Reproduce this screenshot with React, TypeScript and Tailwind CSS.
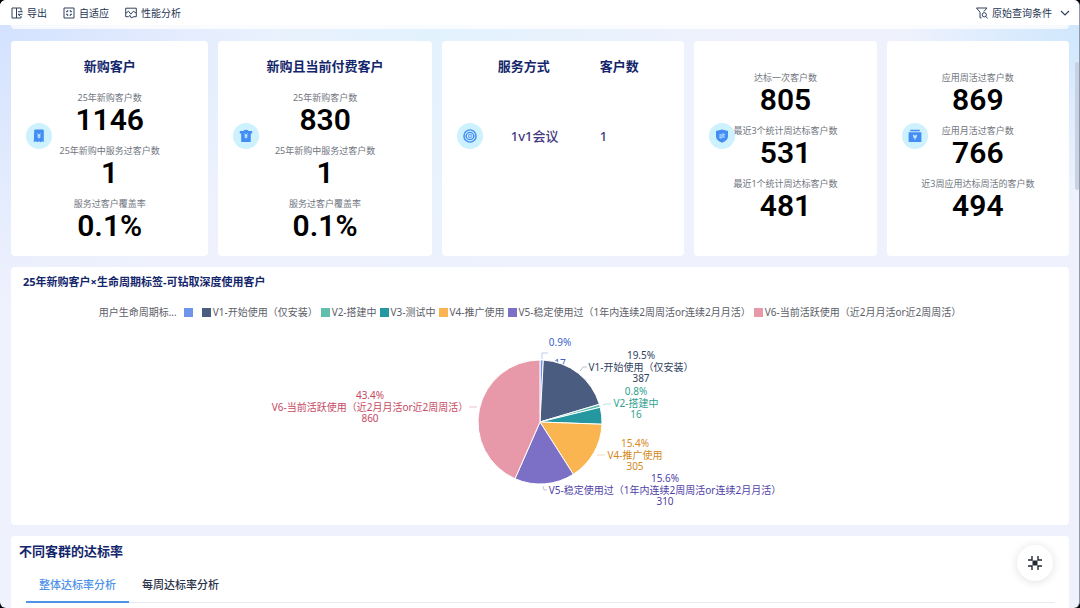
import { useState } from 'react';
import type { ReactNode } from 'react';
import { clsx } from 'clsx';

interface Metric {
  label: string;
  value: string;
}

interface Slice {
  name: string;
  value: number;
  color: string;
  ink: string;
  // 标签中心位置与引导线
  x: number;
  y: number;
  line?: string;
}

const NEW_CUSTOMERS: Metric[] = [
  { label: '25年新购客户数', value: '1146' },
  { label: '25年新购中服务过客户数', value: '1' },
  { label: '服务过客户覆盖率', value: '0.1%' },
];

const PAYING_CUSTOMERS: Metric[] = [
  { label: '25年新购客户数', value: '830' },
  { label: '25年新购中服务过客户数', value: '1' },
  { label: '服务过客户覆盖率', value: '0.1%' },
];

const QUALIFIED: Metric[] = [
  { label: '达标一次客户数', value: '805' },
  { label: '最近3个统计周达标客户数', value: '531' },
  { label: '最近1个统计周达标客户数', value: '481' },
];

const ACTIVE: Metric[] = [
  { label: '应用周活过客户数', value: '869' },
  { label: '应用月活过客户数', value: '766' },
  { label: '近3周应用达标周活的客户数', value: '494' },
];

const SLICES: Slice[] = [
  { name: '', value: 17, color: '#7094ea', ink: '#3b62cf', x: 549, y: 17, line: 'M531 34V28H537' },
  { name: 'V1-开始使用（仅安装）', value: 387, color: '#4a5d80', ink: '#2f3f60', x: 630, y: 42, line: 'M569 46L572 42H576' },
  { name: 'V2-搭建中', value: 16, color: '#62bfae', ink: '#2fa28f', x: 625, y: 78, line: 'M592 80L595 79H600' },
  { name: 'V3-测试中', value: 87, color: '#2497a0', ink: '#2497a0', x: 0, y: 0 },
  { name: 'V4-推广使用', value: 305, color: '#fab550', ink: '#d48a1c', x: 624, y: 130, line: 'M586 130H594' },
  { name: 'V5-稳定使用过（1年内连续2周周活or连续2月月活）', value: 310, color: '#7b70c6', ink: '#4f3fa8', x: 654, y: 165, line: 'M532 161L533 165H536' },
  { name: 'V6-当前活跃使用（近2月月活or近2周周活）', value: 860, color: '#e799a9', ink: '#c64963', x: 359, y: 82, line: 'M458 82H466' },
];

const TABS = ['整体达标率分析', '每周达标率分析'];

function ToolButton({ icon, children }: { icon: ReactNode; children: ReactNode }) {
  return (
    <button className="flex items-center gap-1 text-[10px] leading-4 text-[#263552]">
      {icon}
      {children}
    </button>
  );
}

function ToolIcon({ children }: { children: ReactNode }) {
  return (
    <svg className="size-3" viewBox="0 0 12 12" fill="none" stroke="#30405f" strokeWidth="1">
      {children}
    </svg>
  );
}

function Toolbar() {
  return (
    <header className="flex h-[25px] shrink-0 items-center justify-between bg-white pr-[9px] pl-[11px]">
      <div className="flex gap-4">
        <ToolButton
          icon={
            <ToolIcon>
              <path d="M5.5 1H1v10h4.5zM5.5 1H10v2M10 9v2H5.5M7 4.7h4.5M9.5 3 11.3 4.7M11.5 7.3H7M9 9 7 7.3" />
            </ToolIcon>
          }
        >
          导出
        </ToolButton>
        <ToolButton
          icon={
            <ToolIcon>
              <path d="M1 1h10v10H1zM3 4.7h1.7V3M9 4.7H7.3V3M3 7.3h1.7V9M9 7.3H7.3V9" />
            </ToolIcon>
          }
        >
          自适应
        </ToolButton>
        <ToolButton
          icon={
            <ToolIcon>
              <path d="M3.5 9.7H.7V1.2h10.6v8.5H9M1 6.2l2.5-2 2.3 3 2.6-3L11 6M3.5 9.7l1.5-1.3L6.2 10.8 9 9.7" />
            </ToolIcon>
          }
        >
          性能分析
        </ToolButton>
      </div>
      <button className="flex items-center gap-1 text-[10px] leading-4 text-[#263552]">
        <ToolIcon>
          <path d="M.5 1h10.5L7.8 4.5M.5 1 4 5.2v5.6h1.5" />
          <circle cx="8.3" cy="7.8" r="2.1" />
          <path d="m9.8 9.4 1.7 2" />
        </ToolIcon>
        原始查询条件
        <svg className="ml-1 h-3 w-[10px]" viewBox="0 0 10 12" fill="none" stroke="#30405f" strokeWidth="1.2">
          <path d="m1 4 4 4 4-4" />
        </svg>
      </button>
    </header>
  );
}

function Card({ icon, className, children }: { icon: ReactNode; className?: string; children: ReactNode }) {
  return (
    <section className={clsx('relative min-h-[215px] rounded-[4px] bg-white', className)}>
      {children}
      <span className="absolute top-[82px] left-[15px] flex size-[26px] items-center justify-center rounded-full bg-[#cdf1fd]">
        <svg className="size-[14px]" viewBox="0 0 14 14" fill="#448df5">
          {icon}
        </svg>
      </span>
    </section>
  );
}

function MetricList({ items }: { items: Metric[] }) {
  return (
    <dl className="flex flex-col gap-2 text-center">
      {items.map((item) => (
        <div key={item.label}>
          <dt className="text-[9px] leading-[13px] text-[#70757e]">{item.label}</dt>
          <dd className="font-['Roboto',sans-serif] text-[30px] leading-8 font-semibold text-black">{item.value}</dd>
        </div>
      ))}
    </dl>
  );
}

function CardTitle({ children }: { children: ReactNode }) {
  return <h2 className="mb-[17px] text-center text-[13px] leading-4 font-bold text-[#14266b]">{children}</h2>;
}

const YEN = 'M5.5 4.5 7 6.3 8.5 4.5M7 6.3v3.2M5.5 6.7h3M5.5 8h3';

function MetricCards() {
  return (
    <div className="grid grid-cols-[197fr_213fr_242fr_182fr_182fr] gap-[10px]">
      <Card
        className="pt-[17px]"
        icon={
          <>
            <path d="M2.2 1.6Q2.2.6 3.2.6h7.6q1 0 1 1v11.6l-1.6-1-1.6 1-1.6-1-1.6 1-1.6-1-2 1z" />
            <path d={YEN} stroke="#d5f1ff" strokeWidth=".9" fill="none" />
          </>
        }
      >
        <CardTitle>新购客户</CardTitle>
        <MetricList items={NEW_CUSTOMERS} />
      </Card>
      <Card
        className="pt-[17px]"
        icon={
          <>
            <path d="M.8 2h3.4Q7-.4 9.8 2h3.4v2.6h-1.4v7.6q0 .9-.9.9H3.1q-.9 0-.9-.9V4.6H.8z" />
            <path d={YEN} stroke="#d5f1ff" strokeWidth=".9" fill="none" />
          </>
        }
      >
        <CardTitle>新购且当前付费客户</CardTitle>
        <MetricList items={PAYING_CUSTOMERS} />
      </Card>
      <Card
        className="pt-[17px] pl-14"
        icon={
          <g fill="none" stroke="#448df5">
            <circle cx="7" cy="7" r="6.1" strokeWidth="1.4" />
            <circle cx="7" cy="7" r="3.7" strokeWidth="1.3" />
            <path d="M5.8 5.4h2.4v3.2H5.8zM1 7h2.5M10.5 7H13" strokeWidth=".8" />
          </g>
        }
      >
        <table className="w-full table-fixed text-left text-[13px] leading-4">
          <thead>
            <tr className="text-[#14266b]">
              <th className="w-[102px] font-bold">服务方式</th>
              <th className="font-bold">客户数</th>
            </tr>
          </thead>
          <tbody>
            <tr className="text-[#43387f]">
              <td className="pt-[54px] pl-[13px] font-medium">1v1会议</td>
              <td className="pt-[54px] font-medium">1</td>
            </tr>
          </tbody>
        </table>
      </Card>
      <Card
        className="pt-[30px]"
        icon={
          <>
            <path d="M7 .4 13 2v5.2q0 4-6 6.5-6-2.5-6-6.5V2z" />
            <path d="M4.3 6h5.2L7.8 4.3M9.7 8H4.5l1.7 1.7" stroke="#d5f1ff" strokeWidth="1" fill="none" />
          </>
        }
      >
        <MetricList items={QUALIFIED} />
      </Card>
      <Card
        className="pt-[30px]"
        icon={
          <>
            <path d="M2.2.8h9.6v1.5H2.2zM.6 3.3h12.8v8.9q0 .9-.9.9h-11q-.9 0-.9-.9z" />
            <path d="M5.2 5.8 7 7.6l1.8-1.8M7 7.6v3M5 8h4" stroke="#d5f1ff" strokeWidth="1.1" fill="none" />
          </>
        }
      >
        <MetricList items={ACTIVE} />
      </Card>
    </div>
  );
}

const CX = 529;
const CY = 97;
const R = 62;

function PieChart() {
  const total = SLICES.reduce((sum, s) => sum + s.value, 0);
  let acc = 0;
  const arcs = SLICES.map((s) => {
    const a0 = (acc / total) * Math.PI * 2;
    acc += s.value;
    const a1 = (acc / total) * Math.PI * 2;
    const p = (a: number) => `${CX + R * Math.sin(a)} ${CY - R * Math.cos(a)}`;
    return { color: s.color, d: `M${CX} ${CY}L${p(a0)}A${R} ${R} 0 0 1 ${p(a1)}Z` };
  });

  return (
    <svg className="h-[200px] w-full" viewBox="0 0 1058 200" role="img" aria-label="生命周期标签分布">
      {SLICES.filter((s) => s.line).map((s) => (
        <g key={s.name} fill={s.ink} fontSize="10" textAnchor="middle">
          <path d={s.line} fill="none" stroke={s.ink} strokeOpacity=".4" strokeWidth=".8" />
          <text x={s.x} y={s.y + 4 - (s.name ? 12 : 0)}>{((s.value / total) * 100).toFixed(1)}%</text>
          {s.name && <text x={s.x} y={s.y + 4}>{s.name}</text>}
          <text x={s.x} y={s.y + (s.name ? 15 : 25)}>{s.value}</text>
        </g>
      ))}
      {arcs.map((a) => (
        <path key={a.color} d={a.d} fill={a.color} stroke="#fff" strokeWidth="1" strokeLinejoin="round" />
      ))}
    </svg>
  );
}

function LifecycleCard() {
  return (
    <section className="rounded-[4px] bg-white pt-[7px]">
      <h2 className="pl-3 text-[11px] leading-4 font-bold text-[#14266b]">
        25年新购客户×生命周期标签-可钻取深度使用客户
      </h2>
      <ul className="mt-[14px] mb-[5px] flex items-center justify-center gap-[3px] pr-5 text-[10px] leading-4 whitespace-nowrap text-[#5c6068]">
        <li className="mr-1">用户生命周期标...</li>
        {SLICES.map((s) => (
          <li key={s.color} className="flex items-center gap-0.5">
            <span className="size-[9px]" style={{ backgroundColor: s.color }} />
            {s.name || <span className="w-1" />}
          </li>
        ))}
      </ul>
      <PieChart />
    </section>
  );
}

function RateCard() {
  const [active, setActive] = useState(0);
  return (
    <section className="flex-1 rounded-t-[4px] bg-white pt-[7px]">
      <h2 className="pl-2 text-[13px] leading-4 font-bold text-[#14266b]">不同客群的达标率</h2>
      <div role="tablist" className="mt-2 mr-[14px] ml-[15px] flex border-b border-[#e6eaf0]">
        {TABS.map((tab, i) => (
          <button
            key={tab}
            role="tab"
            aria-selected={active === i}
            onClick={() => setActive(i)}
            className={clsx(
              '-mb-px border-b-2 px-[13px] pt-[10px] pb-2 text-[11px] leading-4 font-medium',
              active === i ? 'border-[#4f93e8] text-[#4f93e8]' : 'border-transparent text-[#2b3448]'
            )}
          >
            {tab}
          </button>
        ))}
      </div>
    </section>
  );
}

export default function App() {
  return (
    <div className="h-screen bg-black font-['Noto_Sans','Noto_Sans_CJK_SC',sans-serif]">
      <div className="relative flex h-full flex-col overflow-hidden rounded-[6px] border-r border-[#8e98a8] bg-[#eff2fd]">
        <Toolbar />
        <main className="flex min-h-0 flex-1 flex-col bg-[radial-gradient(circle_at_0_0,#d3e2ff,transparent_280px),radial-gradient(circle_at_100%_0,#cfe7fd,transparent_180px),radial-gradient(circle_at_40%_0,#e2f2fd,transparent_300px)] pr-[10px] pl-[11px]">
          <div className="h-1 shrink-0 rounded-b-[4px] bg-white/80" />
          <div className="flex flex-1 flex-col gap-[11px] pt-3">
            <MetricCards />
            <LifecycleCard />
            <RateCard />
          </div>
        </main>
        <div className="absolute top-[62px] right-0 h-32 w-1 rounded-full bg-[#c9d2e3]" />
        <button
          aria-label="退出全屏"
          className="absolute right-[26px] bottom-[27px] flex size-9 items-center justify-center rounded-full bg-white shadow-[0_1px_8px_rgba(40,50,80,0.15)]"
        >
          <svg className="size-4" viewBox="0 0 16 16" fill="none" stroke="#222833" strokeWidth="1.4">
            <path d="M1 5h4V1M11 1v4h4M1 11h4v4M15 11h-4v4" />
            <rect x="5.5" y="5.5" width="5" height="5" fill="#222833" stroke="none" />
          </svg>
        </button>
      </div>
    </div>
  );
}
